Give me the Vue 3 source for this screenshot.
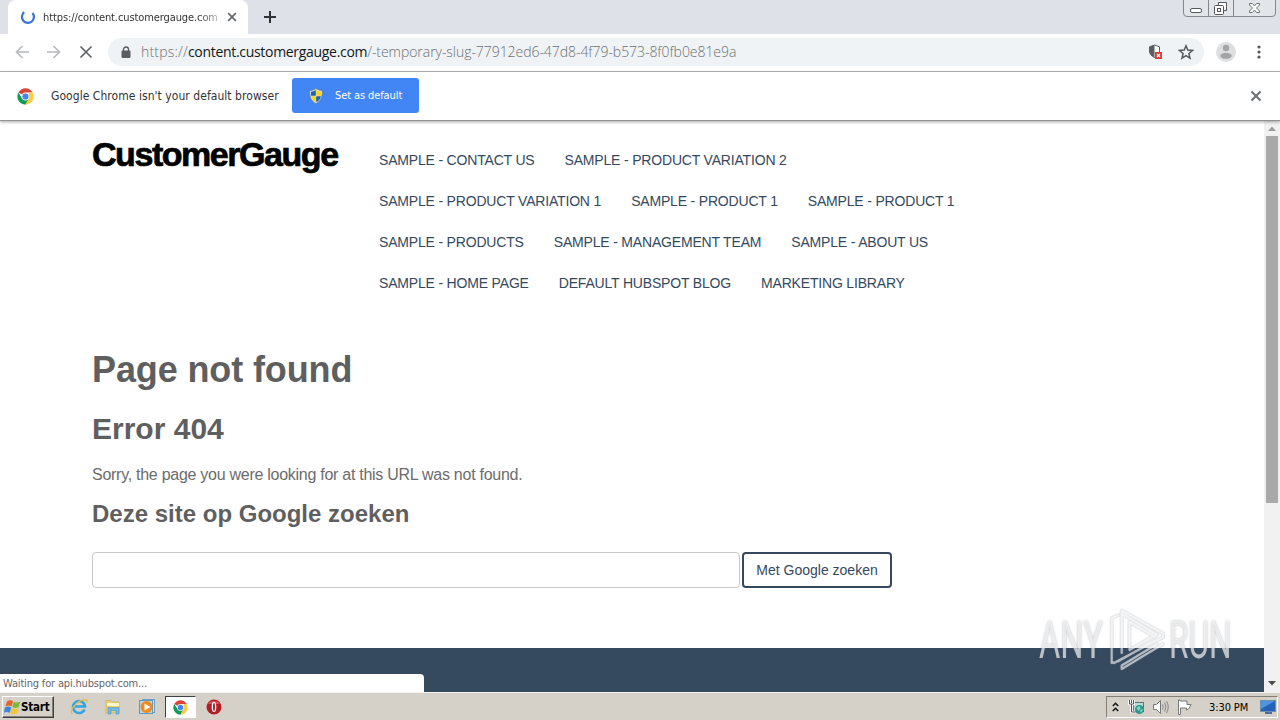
<template>
  <div class="screen">
    <header class="tab-strip">
      <div class="tab">
        <svg class="spinner" width="16" height="16" viewBox="0 0 16 16">
          <path d="M4.2 3.2A6 6 0 1 0 12.5 4" fill="none" stroke="#3474d4" stroke-width="2.2" />
        </svg>
        <span class="tab-title">https://content.customergauge.com</span>
        <svg width="10" height="10" viewBox="0 0 10 10">
          <path d="M1.2 1.2l7.6 7.6M8.8 1.2L1.2 8.8" stroke="#66696d" stroke-width="1.7" />
        </svg>
      </div>
      <svg class="new-tab" width="12" height="12" viewBox="0 0 12 12">
        <path d="M6 0v12M0 6h12" stroke="#303236" stroke-width="2" />
      </svg>
      <svg class="window-buttons" width="94" height="18" viewBox="0 0 94 18">
        <path d="M.5 0v13q0 3.500 3.500 3.500h85q3.500 0 3.500-3.500V0" fill="#e2e5ea" stroke="#84878d" />
        <path d="M25.500 0v16M50.500 0v16" stroke="#84878d" />
        <rect x="7.500" y="8.500" width="11" height="4" rx="1.500" fill="#fff" stroke="#53565d" />
        <path d="M35.500 5.500v-3h8v8h-3" fill="#fff" stroke="#53565d" />
        <rect x="31.500" y="5.500" width="9" height="9" rx="1" fill="#fff" stroke="#53565d" />
        <rect x="34.500" y="8.500" width="3" height="3" fill="#fff" stroke="#53565d" />
        <path d="M66.500 3.500h3l2 2.500 2-2.500h3v1.500l-3 3 3 3v1.500h-3l-2-2.500-2 2.500h-3v-1.500l3-3-3-3z" fill="#fff" stroke="#6d7077" />
      </svg>
    </header>

    <div class="toolbar">
      <svg class="nav-icon" width="14" height="14" viewBox="0 0 14 14">
        <path d="M14 7H1.500M7.500 1L1.500 7l6 6" fill="none" stroke="#b6b8bb" stroke-width="1.600" />
      </svg>
      <svg class="nav-icon" width="14" height="14" viewBox="0 0 14 14">
        <path d="M0 7h12.500M6.500 1l6 6-6 6" fill="none" stroke="#b6b8bb" stroke-width="1.600" />
      </svg>
      <svg class="nav-icon stop" width="14" height="14" viewBox="0 0 14 14">
        <path d="M1.500 1.500l11 11M12.500 1.500l-11 11" stroke="#5f6266" stroke-width="1.700" />
      </svg>
      <div class="omnibox">
        <svg width="10" height="13" viewBox="0 0 10 13">
          <path d="M2.500 5V3.500a2.500 2.500 0 0 1 5 0V5" fill="none" stroke="#5a5d61" stroke-width="1.400" />
          <rect x=".5" y="4.500" width="9" height="7.500" rx="1" fill="#5a5d61" />
        </svg>
        <div class="url"><span class="url-scheme">https://</span><span class="url-host">content.customergauge.com</span><span class="url-path">/-temporary-slug-77912ed6-47d8-4f79-b573-8f0fb0e81e9a</span></div>
        <svg class="shield" width="15" height="16" viewBox="0 0 15 16">
          <path d="M6.500 1L1.500 2.800V7c0 3 2 5 5 6.500C9.500 12 11.500 10 11.500 7V2.800z" fill="#fff" stroke="#5a5d61" stroke-width="1" />
          <path d="M6.500 1L1.500 2.800V7c0 3 2 5 5 6.500z" fill="#5a5d61" />
          <rect x="7" y="8" width="7" height="7" fill="#d93c34" />
          <path d="M9 10l3 3M12 10l-3 3" stroke="#fff" stroke-width="1.200" />
        </svg>
        <svg class="star" width="16" height="16" viewBox="0 0 16 16">
          <path d="M8 1.800l1.800 4.300 4.700.4-3.600 3 1.100 4.600L8 11.700l-4 2.400 1.100-4.600-3.600-3 4.700-.4z" fill="none" stroke="#55585c" stroke-width="1.500" />
        </svg>
      </div>
      <svg class="avatar" width="20" height="20" viewBox="0 0 20 20">
        <circle cx="10" cy="10" r="10" fill="#dedfe0" />
        <circle cx="10" cy="6" r="3.200" fill="#a2a4a6" />
        <ellipse cx="10" cy="13.800" rx="5.700" ry="3" fill="#a2a4a6" />
      </svg>
      <svg class="menu-dots" width="4" height="14" viewBox="0 0 4 14">
        <circle v-for="y in [2, 7, 12]" :key="y" cx="2" :cy="y" r="1.600" fill="#55585c" />
      </svg>
    </div>

    <div class="infobar">
      <svg width="17" height="17" viewBox="0 0 48 48">
        <path d="M24 24L4.100 12.500A23 23 0 0 1 43.900 12.500L44 13H24z" fill="#db4437" />
        <path d="M4.100 12.500A23 23 0 0 0 24 47l10-17.500L24 24l-9.500 5.500z" fill="#0f9d58" />
        <path d="M43.900 12.500A23 23 0 0 1 24 47l9.500-17.500L34 13z" fill="#ffcd40" />
        <circle cx="24" cy="24" r="11" fill="#f1f1f1" />
        <circle cx="24" cy="24" r="8.500" fill="#4285f4" />
      </svg>
      <span class="infobar-text">Google Chrome isn't your default browser</span>
      <button class="default-button">
        <svg width="14" height="16" viewBox="0 0 14 16">
          <path d="M7 .5C5 2 3 2.500.7 2.500.5 9 2 13 7 15.500 12 13 13.500 9 13.300 2.500 11 2.500 9 2 7 .5z" fill="#e4e6df" stroke="#6b7b8d" stroke-width=".7" />
          <path d="M6.800 2C5 3.200 3.800 3.600 2 3.700v4h4.800z" fill="#1f64ad" />
          <path d="M7.200 2C9 3.200 10.200 3.600 12 3.700v4H7.200z" fill="#f8d527" />
          <path d="M2.100 8.200h4.700v6C4 12.500 2.600 11 2.100 8.200z" fill="#f8d527" />
          <path d="M11.900 8.200H7.200v6c2.800-1.700 4.200-3.200 4.700-6z" fill="#1f64ad" />
        </svg>
        <span>Set as default</span>
      </button>
      <svg class="infobar-close" width="12" height="12" viewBox="0 0 12 12">
        <path d="M1.500 1.500l9 9M10.500 1.500l-9 9" stroke="#6a6d70" stroke-width="1.900" />
      </svg>
    </div>

    <div class="viewport">
      <main class="page">
        <div class="page-header">
          <div class="logo">CustomerGauge</div>
          <nav class="site-nav">
            <a v-for="(item, i) in navItems" :key="i">{{ item }}</a>
          </nav>
        </div>
        <div class="page-body">
          <h1>Page not found</h1>
          <h2>Error 404</h2>
          <p>Sorry, the page you were looking for at this URL was not found.</p>
          <h3>Deze site op Google zoeken</h3>
          <form class="search" @submit.prevent>
            <input v-model="query" type="text">
            <button type="submit">Met Google zoeken</button>
          </form>
        </div>
        <footer class="page-footer"></footer>
      </main>
      <div class="scrollbar">
        <svg width="16" height="15" viewBox="0 0 16 15"><path d="M4 10L8 5.500l4 4.500z" fill="#9a9a9a" /></svg>
        <div class="thumb"></div>
        <svg class="arrow-down" width="16" height="17" viewBox="0 0 16 17"><path d="M4 6h8l-4 4.500z" fill="#4d4d4d" /></svg>
      </div>
      <div class="status">Waiting for api.hubspot.com...</div>
      <div class="watermark">
        <span class="mark-any">ANY</span>
        <svg width="60" height="66" viewBox="0 0 60 66">
          <g v-for="layer in markLayers" :key="layer.color" fill="none" :stroke="layer.color" :stroke-opacity="layer.opacity" :stroke-width="layer.width" stroke-linejoin="round" stroke-linecap="round">
            <path d="M10.500 7L3.700 10.300V55l6-1.500L47 32.500M13.700 45V2.500L55 25.500v4L49 32M13.700 2.500v3L49 27M21.500 42V14L47 29M21.500 42L44 29M6 55L47 33M13.700 57.500v3.500L55 36M13.700 57.500L49 36" />
          </g>
        </svg>
        <span class="mark-run">RUN</span>
      </div>
    </div>

    <footer class="taskbar">
      <div class="start">
        <svg width="17" height="16" viewBox="0 0 17 16">
          <path d="M3 2.500C5 1 7 1 9 2.200L7.500 7.500C5.500 6.200 3.500 6.300 1.300 7.500z" fill="#e8622c" />
          <path d="M9.800 2.700c2 1.200 4 1.200 6.500-.2L14.700 8c-2 1.200-4.300 1.200-6.300 0z" fill="#7fb83a" />
          <path d="M1 8.500c2.200-1.200 4.200-1.200 6.200 0L5.700 14c-2-1.200-4-1.200-6-.1z" fill="#3f87d6" />
          <path d="M8 9c2 1.200 4.200 1.200 6.400 0L13 14.300c-2.300 1.200-4.500 1.200-6.500 0z" fill="#f7c52f" />
        </svg>
        <span>Start</span>
      </div>
      <div class="quick">
        <svg width="18" height="18" viewBox="0 0 18 18">
          <path d="M14.500 11.500A6 6 0 1 1 15 8.500H5" fill="none" stroke="#35a5dd" stroke-width="2.600" />
          <path d="M2 16C-1 12 8 1 16.500 2c1 .5.500 2 0 3" fill="none" stroke="#e3bd45" stroke-width="1.300" />
        </svg>
      </div>
      <div class="quick">
        <svg width="18" height="18" viewBox="0 0 18 18">
          <path d="M2 2.500h5l1 1.500h7v11H2z" fill="#ecd17a" stroke="#c9a854" stroke-width=".6" />
          <path d="M3 5h12v3H3z" fill="#fff6c9" />
          <path d="M4 16V9.500h11V16h-3v-3.500H7V16z" fill="#73b9df" stroke="#4b9ac9" stroke-width=".6" />
        </svg>
      </div>
      <div class="quick">
        <svg width="18" height="18" viewBox="0 0 18 18">
          <rect x="4.500" y="1.500" width="12" height="13" fill="#cfe3f1" stroke="#6aa0c8" />
          <rect x="1.500" y="2.500" width="13" height="13" fill="#b8d5e9" stroke="#6297bf" />
          <circle cx="8.500" cy="9" r="6" fill="#f08a1d" />
          <path d="M6.500 5.500v7l6-3.500z" fill="#fff" />
        </svg>
      </div>
      <div class="quick active">
        <svg width="15" height="15" viewBox="0 0 48 48">
          <path d="M24 24L4.100 12.500A23 23 0 0 1 43.900 12.500L44 13H24z" fill="#db4437" />
          <path d="M4.100 12.500A23 23 0 0 0 24 47l10-17.500L24 24l-9.500 5.500z" fill="#0f9d58" />
          <path d="M43.900 12.500A23 23 0 0 1 24 47l9.500-17.500L34 13z" fill="#ffcd40" />
          <circle cx="24" cy="24" r="11" fill="#f1f1f1" />
          <circle cx="24" cy="24" r="8.500" fill="#4285f4" />
        </svg>
      </div>
      <div class="quick opera">
        <svg width="16" height="16" viewBox="0 0 16 16">
          <circle cx="8" cy="8" r="7.500" fill="#b51d24" />
          <path d="M2 5a7 6 0 0 1 12 0z" fill="#d9575b" />
          <ellipse cx="8" cy="8" rx="2.300" ry="5" fill="#fff" />
          <ellipse cx="8" cy="8" rx=".9" ry="4" fill="#8d1219" />
        </svg>
      </div>
      <div class="tray">
        <svg width="7" height="11" viewBox="0 0 7 11">
          <path d="M.8 4L3.500 1.300 6.200 4M.8 9L3.500 6.300 6.200 9" fill="none" stroke="#111" stroke-width="1.500" />
        </svg>
        <svg class="network" width="18" height="16" viewBox="0 0 18 16">
          <rect x="5.500" y="3.500" width="10" height="9" fill="#b9dcd8" stroke="#5a7373" />
          <path d="M1.500 1v4h4V1M3.500 1v3M3.500 5v8h4" fill="none" stroke="#fff" stroke-width="2.600" />
          <path d="M1.500 1v4h4V1M3.500 1v3M3.500 5v8h4" fill="none" stroke="#555" stroke-width="1" />
          <circle cx="11.500" cy="10.500" r="4.500" fill="#289a91" />
          <path d="M8.500 9l3-2 1 2-2 3zM12 11l3-1-2 4z" fill="#8fd6bd" />
        </svg>
        <svg class="volume" width="17" height="16" viewBox="0 0 17 16">
          <path d="M1.500 5.500h3l4-4v13l-4-4h-3z" fill="#fff" stroke="#777" />
          <path d="M10.500 5.500q1.500 2.500 0 5M12.500 3.500q3 4.500 0 9M14.500 2q3.500 6 0 12" fill="none" stroke="#888" />
        </svg>
        <svg class="flag" width="17" height="16" viewBox="0 0 17 16">
          <path d="M1.500 1v14.500h2V9h6v2q3-.5 4.500-5.500h-4V2h-7V1z" fill="#fff" stroke="#777" />
        </svg>
        <span class="clock">3:30 PM</span>
        <svg class="desktop" width="16" height="14" viewBox="0 0 16 14">
          <rect x=".5" y=".5" width="15" height="11" fill="#2463b8" stroke="#6f8fae" />
          <path d="M1 1h14L1 9z" fill="#4f94dc" />
          <path d="M5 13h7" stroke="#1f4c86" stroke-width="1.500" />
        </svg>
      </div>
    </footer>
  </div>
</template>

<script setup>
import { ref } from 'vue'

const query = ref('')

const navItems = [
  'Sample - Contact Us',
  'Sample - Product Variation 2',
  'Sample - Product Variation 1',
  'Sample - Product 1',
  'Sample - Product 1',
  'Sample - Products',
  'Sample - Management Team',
  'Sample - About Us',
  'Sample - Home Page',
  'Default HubSpot Blog',
  'Marketing Library'
]

// soft outline first, white strokes on top
const markLayers = [
  { color: '#6f747c', opacity: 0.2, width: 4 },
  { color: '#ffffff', opacity: 0.6, width: 2.2 }
]
</script>

<style>
body {
  margin: 0;
  overflow: hidden;
}
</style>

<style scoped>
* {
  box-sizing: border-box;
}

svg {
  display: block;
  flex: none;
}

.screen {
  display: flex;
  flex-direction: column;
  width: 1280px;
  height: 720px;
  overflow: hidden;
  background: #fff;
  font-family: "DejaVu Sans Condensed", "DejaVu Sans", sans-serif;
  white-space: nowrap;
}

.tab-strip {
  display: flex;
  height: 34px;
  background: #dee1e8;
}

.tab {
  display: flex;
  align-items: center;
  width: 240px;
  margin-left: 8px;
  padding: 0 11px 0 12px;
  background: #fff;
  border-radius: 8px 8px 0 0;
}

.tab-title {
  width: 176px;
  margin: 0 9px 0 7px;
  color: #333;
  font-size: 11px;
  letter-spacing: -0.1px;
  mask-image: linear-gradient(to right, #000 155px, rgba(0, 0, 0, 0.3) 176px);
}

.new-tab {
  margin: 11px 0 0 16px;
}

.window-buttons {
  margin-left: auto;
  margin-right: 3px;
}

.toolbar {
  display: flex;
  align-items: center;
  height: 38px;
  padding-left: 15px;
  padding-bottom: 1px;
  border-bottom: 1px solid #b3b5b7;
}

.nav-icon {
  margin-right: 18px;
}

.stop {
  margin-right: 15px;
}

.omnibox {
  display: flex;
  align-items: center;
  width: 1096px;
  height: 28px;
  padding: 0 10px 0 13px;
  background: #f0f3f5;
  border-radius: 14px;
}

.url {
  margin-left: 10px;
  padding-bottom: 2px;
  font-family: "Open Sans", sans-serif;
  font-weight: 300;
  font-size: 14px;
  color: #6c7074;
}

.url-scheme {
  letter-spacing: 0.2px;
}

.url-host {
  color: #111820;
  font-weight: 400;
  letter-spacing: -0.31px;
}

.url-path {
  letter-spacing: -0.05px;
}

.shield {
  margin-left: auto;
}

.star {
  margin-left: 15px;
}

.avatar {
  margin-left: 12px;
}

.menu-dots {
  margin-left: 21px;
}

.infobar {
  display: flex;
  align-items: center;
  height: 49px;
  padding-left: 17px;
  border-bottom: 1px solid #929292;
  position: relative;
  z-index: 1;
  box-shadow: 0 1px 3px rgba(0, 0, 0, 0.35);
}

.infobar-text {
  width: 241px;
  margin-left: 17px;
  color: #333;
  font-size: 12px;
  letter-spacing: 0.05px;
}

.default-button {
  display: flex;
  align-items: center;
  gap: 12px;
  width: 127px;
  height: 35px;
  margin-bottom: 1px;
  padding: 0 0 0 17px;
  background: #4285f4;
  border: none;
  border-radius: 3px;
  color: #fff;
  font-family: inherit;
  font-size: 11px;
  letter-spacing: -0.1px;
}

.infobar-close {
  margin-left: auto;
  margin-right: 18px;
}

.viewport {
  display: flex;
  position: relative;
  height: 571px;
}

.page {
  display: flex;
  flex-direction: column;
  width: 1264px;
  font-family: "Liberation Sans", Arial, sans-serif;
}

.page-header {
  display: flex;
  height: 214px;
  padding: 15px 0 0 92px;
}

.logo {
  width: 287px;
  color: #000;
  font-weight: 700;
  font-size: 34px;
  line-height: 37px;
  letter-spacing: -1.45px;
  -webkit-text-stroke: 0.7px #000;
}

.site-nav {
  display: flex;
  flex-wrap: wrap;
  align-content: flex-start;
  column-gap: 30px;
  width: 620px;
  padding-top: 4px;
}

.site-nav a {
  color: #34495e;
  font-size: 14px;
  line-height: 41px;
  letter-spacing: -0.18px;
  text-transform: uppercase;
}

.page-body {
  padding-left: 92px;
  color: #5f5f5f;
}

h1,
h2,
h3,
p {
  margin: 0;
}

h1 {
  padding-top: 10px;
  font-size: 36px;
  line-height: 50px;
  letter-spacing: -0.12px;
}

h2 {
  padding-top: 14px;
  font-size: 30px;
  line-height: 40px;
}

p {
  padding-top: 14px;
  color: #6c6c6c;
  font-size: 16px;
  line-height: 24px;
  letter-spacing: -0.27px;
}

h3 {
  padding-top: 12px;
  font-size: 24px;
  line-height: 30px;
}

.search {
  display: flex;
  gap: 2px;
  margin-top: 23px;
}

.search input {
  width: 648px;
  height: 36px;
  border: 1px solid #c8c8c8;
  border-radius: 4px;
  outline: none;
}

.search button {
  width: 150px;
  height: 36px;
  padding: 0;
  background: #fff;
  border: 2px solid #34495e;
  border-radius: 4px;
  color: #34495e;
  font-family: inherit;
  font-size: 14px;
}

.page-footer {
  height: 44px;
  margin-top: auto;
  background: #35495f;
}

.scrollbar {
  display: flex;
  flex-direction: column;
  align-items: center;
  width: 16px;
  background: #f1f1f1;
}

.thumb {
  width: 12px;
  height: 367px;
  background: #a9a9a9;
}

.arrow-down {
  margin-top: auto;
}

.status {
  position: absolute;
  left: 0;
  bottom: 0;
  width: 424px;
  height: 18px;
  padding-left: 3px;
  background: #fff;
  border-radius: 0 4px 0 0;
  color: #666;
  font-size: 11px;
  line-height: 19px;
  letter-spacing: -0.17px;
}

.watermark {
  display: flex;
  align-items: center;
  position: absolute;
  left: 1039px;
  top: 487px;
  color: rgba(255, 255, 255, 0.65);
  font-family: Roboto, sans-serif;
  font-size: 51px;
  line-height: 66px;
  text-shadow: 0 0 3px rgba(90, 95, 105, 0.45);
}

.watermark span {
  width: 64px;
  transform: scaleX(0.64);
  transform-origin: left;
}

.watermark .mark-run {
  transform: scaleX(0.62);
}

.watermark svg {
  margin: 0 1px 0 5px;
}

.taskbar {
  display: flex;
  align-items: center;
  height: 28px;
  padding: 1px 0 0 2px;
  background: #d6d1c8;
  border-top: 1px solid #f5f4f1;
}

.start {
  display: flex;
  align-items: center;
  width: 52px;
  height: 22px;
  padding-left: 1px;
  border: 1px solid;
  border-color: #fff #404040 #404040 #fff;
  box-shadow: inset -1px -1px #848078;
  color: #000;
  font-weight: 700;
  font-size: 11.5px;
  letter-spacing: -0.2px;
  margin-right: 9px;
}

.quick {
  display: flex;
  align-items: center;
  justify-content: center;
  width: 31px;
  height: 22px;
  margin-right: 3px;
}

.active {
  margin-right: 2px;
  background: #fff;
  border: 1px solid;
  border-color: #404040 #fff #fff #404040;
}

.tray {
  display: flex;
  align-items: center;
  width: 172px;
  height: 22px;
  margin-left: auto;
  margin-right: 2px;
  padding-left: 5px;
  border: 1px solid;
  border-color: #848078 #fff #fff #848078;
}

.network {
  margin-left: 9px;
}

.volume {
  margin-left: 6px;
}

.flag {
  margin-left: 8px;
}

.clock {
  width: 40px;
  margin-left: 15px;
  color: #000;
  font-size: 11px;
  letter-spacing: -0.1px;
}

.desktop {
  margin-left: 11px;
}
</style>
